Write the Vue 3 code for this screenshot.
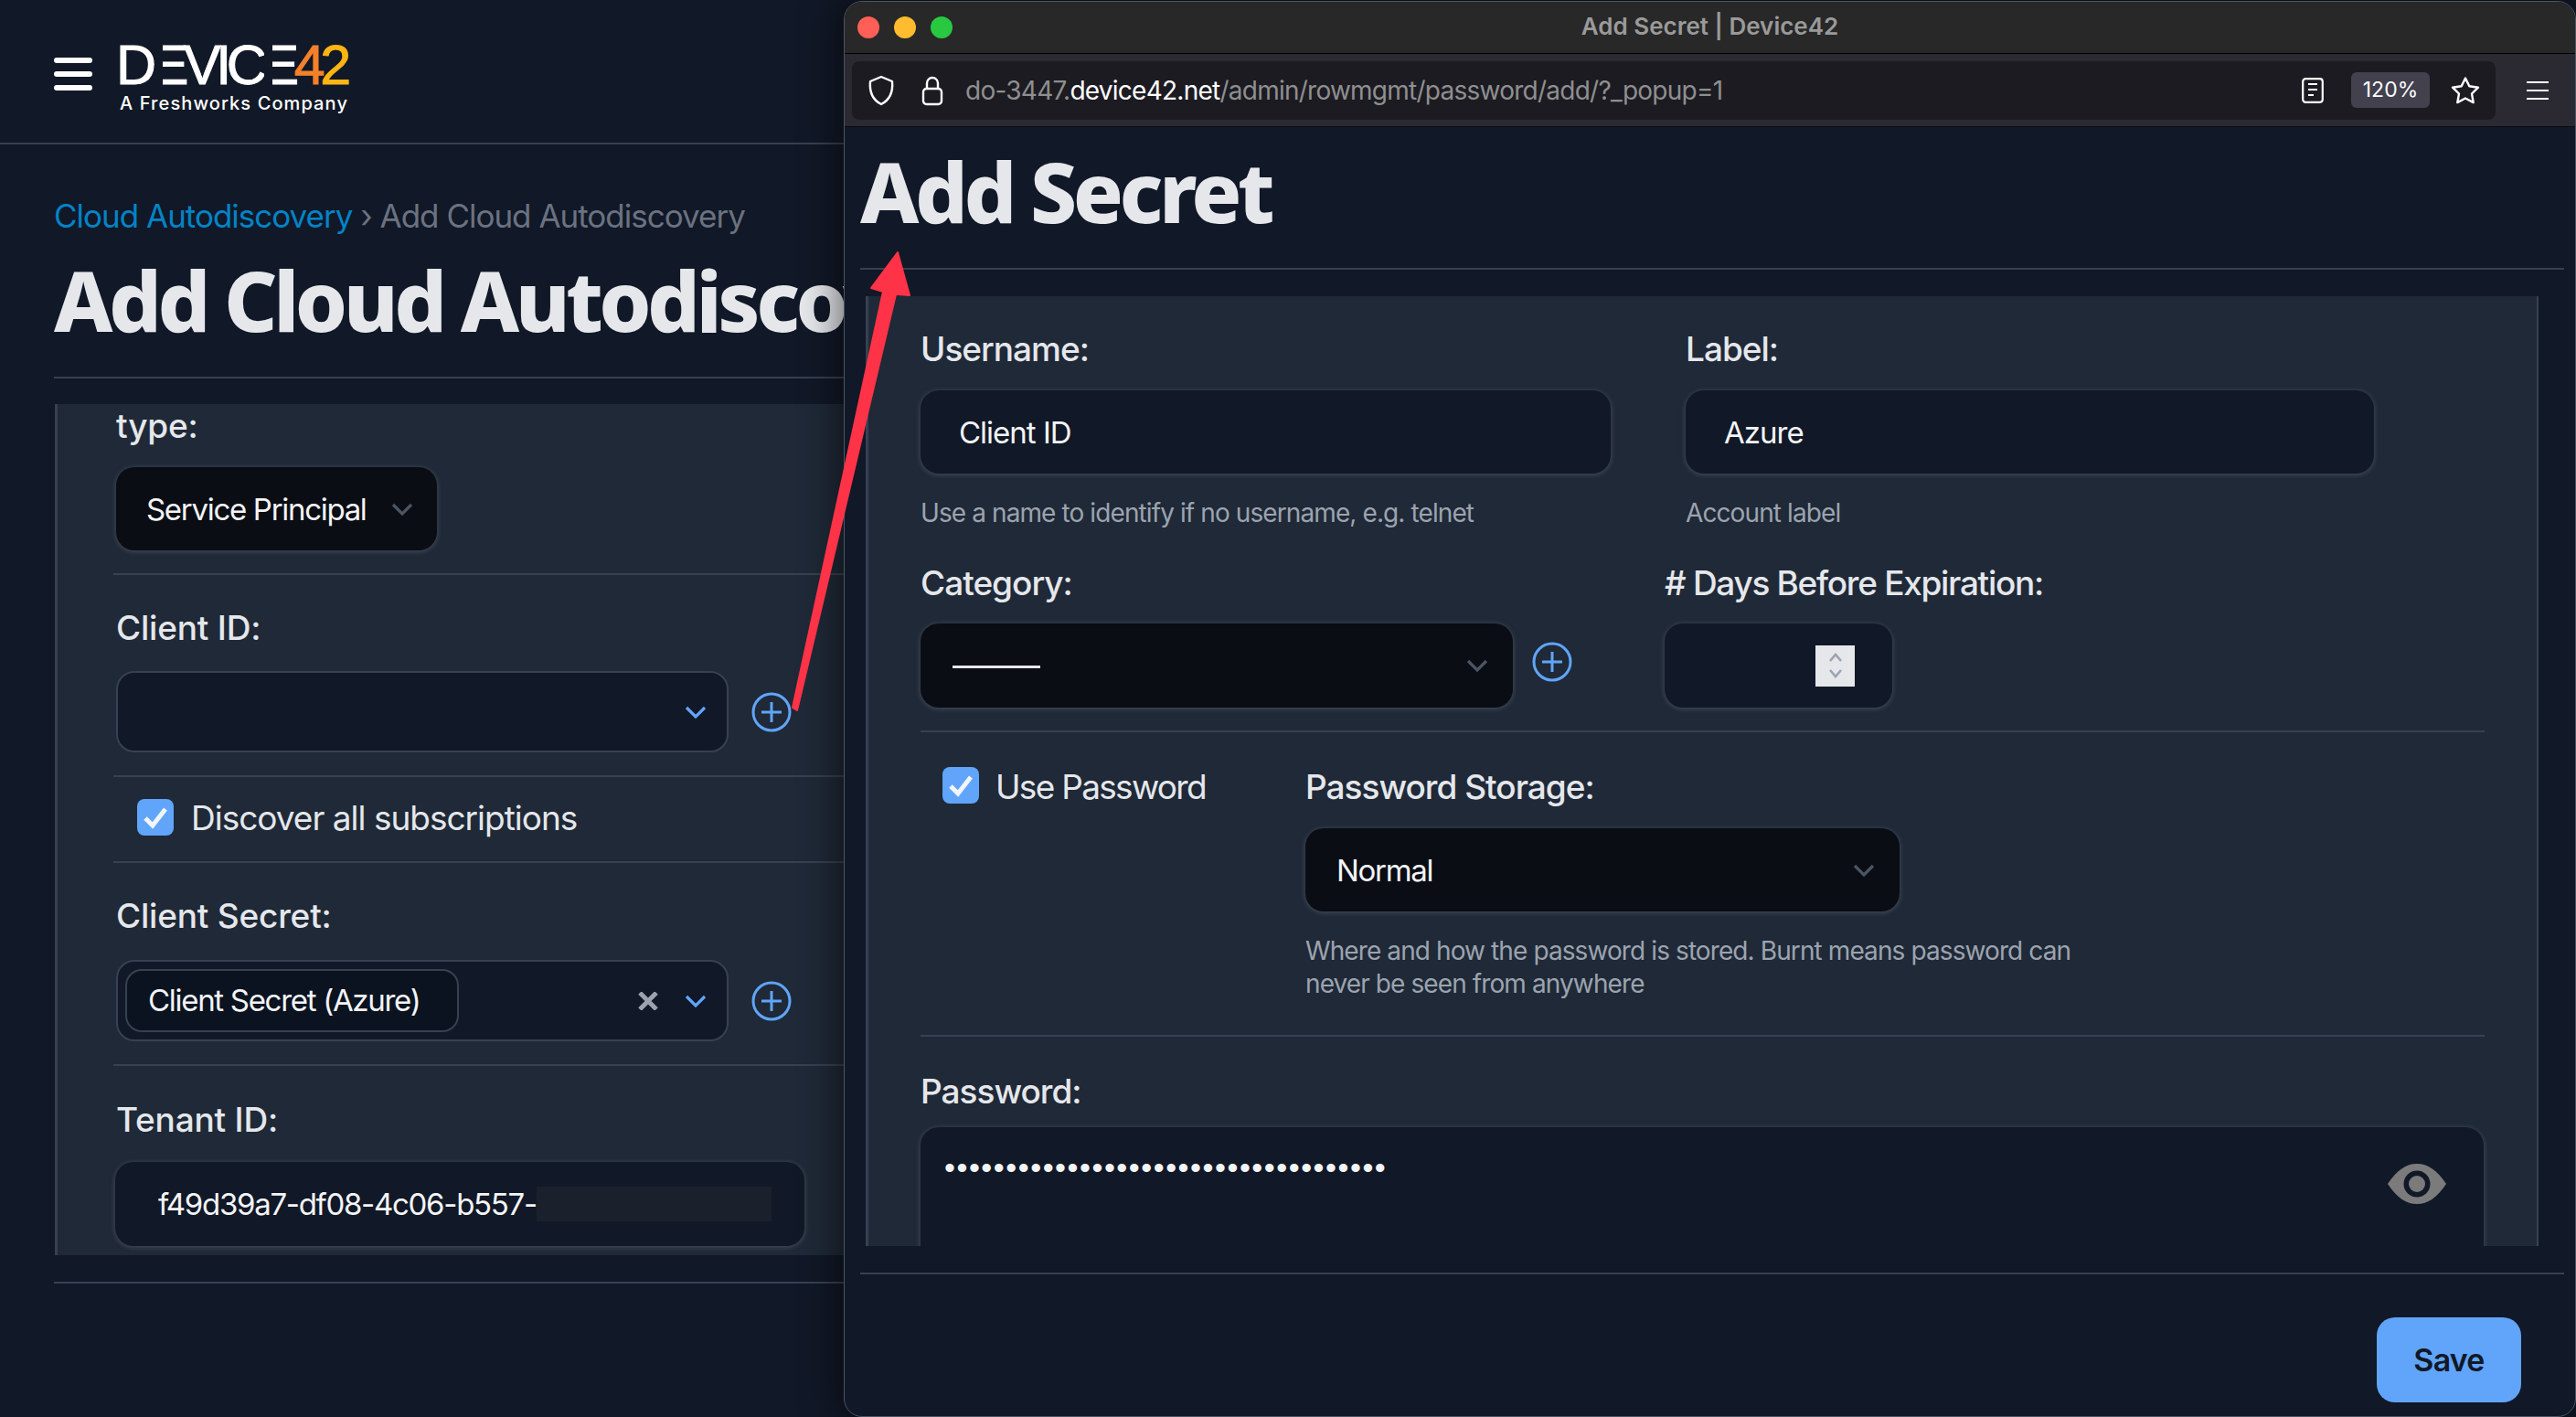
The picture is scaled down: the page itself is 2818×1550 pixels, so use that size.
<template>
  <div class="desk">
    <svg class="defs" aria-hidden="true">
      <symbol id="chev" viewBox="0 0 24 14">
        <polyline points="2,2 12,12 22,2" fill="none" stroke="currentColor" stroke-width="3.2" />
      </symbol>
      <symbol id="plus" viewBox="0 0 44 44">
        <circle cx="22" cy="22" r="20" fill="none" stroke="currentColor" stroke-width="3" />
        <path d="M22 11v22M11 22h22" fill="none" stroke="currentColor" stroke-width="3" />
      </symbol>
      <symbol id="check" viewBox="0 0 40 40">
        <polyline points="9,21 17,29 31,11" fill="none" stroke="currentColor" stroke-width="5" />
      </symbol>
    </svg>

    <!-- page behind the popup -->
    <div class="page">
      <header class="topbar">
        <button class="burger"><span></span><span></span><span></span></button>
        <div class="logo">
          <div class="logo-word">D<span class="logo-e">E</span>VIC<span class="logo-e">E</span><span class="four">4</span><span class="two">2</span></div>
          <div class="logo-sub">A Freshworks Company</div>
        </div>
      </header>

      <main class="content">
        <div class="crumbs"><a>Cloud Autodiscovery</a> › Add Cloud Autodiscovery</div>
        <h1 class="title">Add Cloud Autodiscovery</h1>
        <div class="rule"></div>

        <div class="panel back-panel">
          <div class="row row-type">
            <label>type:</label>
            <div class="control select type-select">
              <span>Service Principal</span>
              <svg class="chev grey"><use href="#chev" /></svg>
            </div>
          </div>
          <div class="row">
            <label>Client ID:</label>
            <div class="with-add">
              <div class="control picker">
                <svg class="chev blue"><use href="#chev" /></svg>
              </div>
              <svg class="plus"><use href="#plus" /></svg>
            </div>
          </div>
          <div class="row row-check">
            <span class="checkbox"><svg><use href="#check" /></svg></span>
            <span class="check-text">Discover all subscriptions</span>
          </div>
          <div class="row row-secret">
            <label>Client Secret:</label>
            <div class="with-add">
              <div class="control picker">
                <span class="tag">Client Secret (Azure)</span>
                <svg class="clear" viewBox="0 0 24 20"><path d="M3 1l18 18M21 1L3 19" stroke="currentColor" stroke-width="5" fill="none" /></svg>
                <svg class="chev blue"><use href="#chev" /></svg>
              </div>
              <svg class="plus"><use href="#plus" /></svg>
            </div>
          </div>
          <div class="row row-tenant">
            <label>Tenant ID:</label>
            <div class="control tenant">
              <span>f49d39a7-df08-4c06-b557-</span>
              <span class="redact"></span>
            </div>
          </div>
        </div>
        <div class="rule back-bottom"></div>
      </main>
    </div>

    <!-- popup window -->
    <section class="window">
      <div class="titlebar">
        <div class="lights"><i class="red"></i><i class="yellow"></i><i class="green"></i></div>
        <div class="win-title">Add Secret | Device42</div>
      </div>
      <div class="toolbar">
        <div class="urlbar">
          <svg class="tb-shield" viewBox="0 0 30 34"><path d="M15 2 L27 7 C28 18 25 27 15 32 C5 27 2 18 3 7 Z" fill="none" stroke="#fff" stroke-width="2.4" stroke-linejoin="round" /></svg>
          <svg class="tb-lock" viewBox="0 0 24 34"><rect x="2" y="15" width="20" height="17" rx="3.5" fill="none" stroke="#fff" stroke-width="2.4" /><path d="M6 15V9a6 6 0 0 1 12 0v6" fill="none" stroke="#fff" stroke-width="2.4" /></svg>
          <div class="url">do-3447.<b>device42.net</b>/admin/rowmgmt/password/add/?_popup=1</div>
          <svg class="tb-doc" viewBox="0 0 24 28"><rect x="1.2" y="1.2" width="21.6" height="25.6" rx="3" fill="none" stroke="#fff" stroke-width="2.2" /><path d="M7 7h10M7 13h10M7 19h6" stroke="#fff" stroke-width="2.2" /></svg>
          <div class="zoom-badge">120%</div>
          <svg class="tb-star" viewBox="0 0 34 32"><path d="M17 2.5l4.3 8.8 9.7 1.4-7 6.8 1.7 9.6-8.7-4.6-8.7 4.6 1.7-9.6-7-6.8 9.7-1.4z" fill="none" stroke="#fff" stroke-width="2.4" stroke-linejoin="round" /></svg>
        </div>
        <svg class="tb-menu" viewBox="0 0 24 20"><path d="M0 1h24M0 10h24M0 19h24" stroke="#fff" stroke-width="2" /></svg>
      </div>

      <div class="win-body">
        <h1 class="title">Add Secret</h1>
        <div class="rule"></div>

        <div class="panel front-panel">
          <div class="front-rows">
            <div class="grid-top">
              <div class="col">
                <label>Username:</label>
                <div class="control input">Client ID</div>
                <p class="help">Use a name to identify if no username, e.g. telnet</p>
              </div>
              <div class="col">
                <label>Label:</label>
                <div class="control input">Azure</div>
                <p class="help">Account label</p>
              </div>
            </div>
            <div class="grid-cat">
              <div class="col">
                <label>Category:</label>
                <div class="with-add cat-add">
                  <div class="control select cat-select">
                    <span class="dash"></span>
                    <svg class="chev grey"><use href="#chev" /></svg>
                  </div>
                  <svg class="plus"><use href="#plus" /></svg>
                </div>
              </div>
              <div class="col">
                <label class="days-label">#&nbsp;Days Before Expiration:</label>
                <div class="control days">
                  <span class="spin">
                    <svg viewBox="0 0 18 34"><path d="M3 12l6-7 6 7M3 22l6 7 6-7" fill="none" stroke="#9ca3af" stroke-width="2.6" /></svg>
                  </span>
                </div>
              </div>
            </div>
            <div class="grid-pass">
              <div class="use-pass">
                <span class="checkbox"><svg><use href="#check" /></svg></span>
                <span class="check-text">Use Password</span>
              </div>
              <div class="col">
                <label>Password Storage:</label>
                <div class="control select storage">
                  <span>Normal</span>
                  <svg class="chev grey"><use href="#chev" /></svg>
                </div>
                <p class="help storage-help">Where and how the password is stored. Burnt means password can never be seen from anywhere</p>
              </div>
            </div>
            <div class="pass-row">
              <label>Password:</label>
              <div class="control pass-box">
                <span class="dots">{{ dots }}</span>
                <svg class="eye" viewBox="0 0 64 44">
                  <path d="M0 22C10 7 20 0 32 0s22 7 32 22c-10 15-20 22-32 22S10 37 0 22z" fill="#7b7b7b" />
                  <circle cx="32" cy="22" r="14.5" fill="#111827" />
                  <circle cx="32" cy="22" r="9" fill="#7b7b7b" />
                </svg>
              </div>
            </div>
          </div>
        </div>

        <div class="rule win-bottom"></div>
        <div class="actions"><button class="save">Save</button></div>
      </div>
    </section>

    <!-- red annotation arrow, drawn on top of everything -->
    <svg class="arrow" viewBox="0 0 2818 1550">
      <polygon points="867,774 872,777 980,322 995,323 982,276 953,315 966,319" fill="#ff3347" stroke="#ff3347" stroke-width="2" stroke-linejoin="round" />
    </svg>
  </div>
</template>

<script setup>
const dots = '•'.repeat(36)
</script>

<style>
html, body {
  margin: 0;
  background: #111827;
}
</style>

<style scoped>
.desk {
  position: relative;
  width: 2818px;
  height: 1550px;
  overflow: hidden;
  background: #111827;
  color: #e5e7eb;
  font-family: Inter, "Noto Sans", sans-serif;
}

.defs {
  position: absolute;
  width: 0;
  height: 0;
}

/* back page */
.page {
  width: 930px;
  height: 1550px;
  overflow: hidden;
}

.topbar {
  height: 156px;
  border-bottom: 2px solid #374151;
  display: flex;
  align-items: center;
  padding-left: 59px;
  gap: 30px;
}

.burger {
  width: 42px;
  height: 36px;
  padding: 0;
  margin-top: 6px;
  border: 0;
  background: none;
  display: flex;
  flex-direction: column;
  justify-content: space-between;
}

.burger span {
  display: block;
  height: 6px;
  border-radius: 3px;
  background: #fff;
}

.logo {
  align-self: flex-start;
  width: 250px;
  padding-top: 47px;
}

.logo-word {
  font-family: "Liberation Sans", sans-serif;
  font-size: 61px;
  line-height: 48px;
  height: 48px;
  color: #fff;
  white-space: nowrap;
  letter-spacing: -5.4px;
  margin-left: -4px;
  -webkit-text-stroke: 1px currentColor;
}

.logo-e {
  position: relative;
}

.logo-e::before {
  content: "";
  position: absolute;
  left: 3px;
  top: 0;
  width: 9px;
  height: 100%;
  background: #111827;
}

.four {
  color: #f4812a;
}

.two {
  color: #fdb515;
}

.logo-sub {
  margin-top: 4px;
  font-size: 20px;
  font-weight: 500;
  line-height: 28px;
  letter-spacing: 1.1px;
  color: #fff;
  white-space: nowrap;
}

.content {
  padding: 54px 0 0 59px;
}

.crumbs {
  height: 48px;
  line-height: 48px;
  font-size: 35px;
  letter-spacing: -1px;
  color: #6b7280;
  white-space: nowrap;
}

.crumbs a {
  color: #0284c7;
}

.title {
  margin: 14px 0 30px;
  height: 108px;
  font-family: "Noto Sans", sans-serif;
  font-size: 91px;
  font-weight: 800;
  line-height: 108px;
  letter-spacing: -4.5px;
  color: #e5e7eb;
  white-space: nowrap;
}

.rule {
  height: 2px;
  background: #374151;
}

.panel {
  background: #1f2937;
  border-left: 3px solid #374151;
  overflow: hidden;
}

.back-panel {
  margin: 28px 0 0 1px;
  height: 931px;
  padding-left: 61px;
}

.back-bottom {
  margin-top: 29px;
}

label {
  display: block;
  height: 40px;
  line-height: 40px;
  font-size: 37px;
  font-weight: 500;
  letter-spacing: -1px;
  color: #e5e7eb;
  white-space: nowrap;
}

.row {
  padding: 38px 0 25px 3px;
  border-bottom: 2px solid #374151;
}

.row label {
  margin-bottom: 27px;
  letter-spacing: -.2px;
}

.row-type {
  padding-top: 4px;
}

.row-type label {
  margin-bottom: 25px;
}

.row-check {
  height: 94px;
  box-sizing: border-box;
  padding: 0 0 4px 26px;
  display: flex;
  align-items: center;
  gap: 19px;
}

.row-secret label {
  margin-bottom: 28px;
}

.row-tenant {
  padding-top: 39px;
  border-bottom: 0;
}

.row-tenant label {
  margin-bottom: 26px;
}

.control {
  box-sizing: border-box;
  display: flex;
  align-items: center;
  border-radius: 20px;
  background: #111827;
  font-size: 33px;
  letter-spacing: -1.3px;
  color: #f3f4f6;
  box-shadow: 0 1px 5px 1px rgba(107, 114, 128, .4);
  white-space: nowrap;
}

.select {
  background: #0a0d14;
  justify-content: space-between;
}

.type-select {
  width: 351px;
  height: 91px;
  padding: 0 26px 0 33px;
}

.chev {
  width: 24px;
  height: 14px;
  flex: none;
}

.chev.grey {
  color: #4b5563;
}

.chev.blue {
  color: #60a5fa;
}

.plus {
  width: 44px;
  height: 44px;
  flex: none;
  color: #60a5fa;
}

.with-add {
  display: flex;
  align-items: center;
  gap: 25px;
}

.picker {
  width: 670px;
  height: 89px;
  justify-content: flex-end;
  padding: 0 22px 0 8px;
  border: 2px solid #374151;
  box-shadow: none;
}

.tag {
  margin-right: auto;
  width: 365px;
  height: 69px;
  box-sizing: border-box;
  padding-left: 23px;
  line-height: 65px;
  border: 2px solid #374151;
  border-radius: 18px;
  background: #0b1320;
}

.clear {
  width: 24px;
  height: 20px;
  color: #9ca3af;
  margin-right: 28px;
}

.checkbox {
  width: 40px;
  height: 40px;
  flex: none;
  border-radius: 8px;
  background: #60a5fa;
  color: #f3f4f6;
}

.checkbox svg {
  display: block;
  width: 40px;
  height: 40px;
}

.check-text {
  font-size: 37px;
  letter-spacing: -1px;
  color: #e5e7eb;
}

.tenant {
  width: 754px;
  height: 92px;
  padding-left: 47px;
  margin-left: -1px;
  letter-spacing: -1.3px;
}

.redact {
  width: 257px;
  height: 38px;
  background: #1a202c;
}

/* popup window */
.window {
  position: absolute;
  left: 923px;
  top: 1px;
  width: 1895px;
  height: 1549px;
  box-sizing: border-box;
  border: 1px solid #4b5563;
  border-radius: 20px;
  overflow: hidden;
  background: #111827;
  box-shadow: 0 0 40px 6px rgba(0, 0, 0, .55);
}

.titlebar {
  position: relative;
  height: 56px;
  background: #282828;
  border-bottom: 1px solid #000;
  display: flex;
  align-items: center;
  justify-content: center;
}

.lights {
  position: absolute;
  left: 14px;
  top: 16px;
  display: flex;
  gap: 16px;
}

.lights i {
  width: 24px;
  height: 24px;
  border-radius: 50%;
}

.red {
  background: #ff5f57;
}

.yellow {
  background: #febc2e;
}

.green {
  background: #28c840;
}

.win-title {
  margin-top: -3px;
  font-size: 26px;
  font-weight: 600;
  color: #9a9a9a;
}

.toolbar {
  height: 79px;
  background: #2b2a33;
  border-bottom: 1px solid #0c0c10;
  display: flex;
  align-items: center;
  padding: 0 29px 0 8px;
}

.urlbar {
  width: 1798px;
  height: 64px;
  border-radius: 8px;
  background: #1c1b22;
  display: flex;
  align-items: center;
  padding: 0 16px 0 17px;
  box-sizing: border-box;
}

.tb-shield {
  width: 30px;
  height: 34px;
  margin-right: 29px;
}

.tb-lock {
  width: 24px;
  height: 34px;
  margin-right: 24px;
}

.url {
  font-size: 28px;
  letter-spacing: -.75px;
  color: #8f8f8f;
  white-space: nowrap;
  margin-right: auto;
}

.url b {
  font-weight: 400;
  color: #fff;
}

.tb-doc {
  width: 24px;
  height: 28px;
  margin-right: 30px;
}

.zoom-badge {
  width: 86px;
  height: 39px;
  line-height: 39px;
  text-align: center;
  border-radius: 6px;
  background: #42414d;
  font-size: 23px;
  color: #fbfbfe;
}

.tb-star {
  width: 34px;
  height: 32px;
  margin-left: 22px;
}

.tb-menu {
  width: 24px;
  height: 20px;
  margin-left: auto;
}

.win-body {
  padding: 16px 12px 0 17px;
}

.win-body .title {
  margin: 0 0 30px;
}

.front-panel {
  margin: 29px 28px 0 6px;
  height: 1039px;
  border-right: 2px solid #374151;
}

.front-rows {
  padding: 38px 0 0 57px;
  width: 1711px;
}

.col label {
  margin-bottom: 25px;
}

.grid-top {
  display: grid;
  grid-template-columns: 755px 753px;
  gap: 82px;
}

.input {
  height: 91px;
  padding-left: 42px;
  letter-spacing: -1px;
}

.help {
  margin: 25px 0 0;
  font-size: 28px;
  line-height: 36px;
  letter-spacing: -.9px;
  color: #9ca3af;
}

.grid-cat {
  margin-top: 39px;
  padding-bottom: 25px;
  border-bottom: 2px solid #374151;
  display: grid;
  grid-template-columns: 713px auto;
  gap: 101px;
}

.grid-cat .col label {
  margin-bottom: 24px;
}

.days-label {
  letter-spacing: -1.3px;
}

.cat-add {
  gap: 21px;
}

.cat-add .plus {
  margin-bottom: 8px;
}

.cat-select {
  width: 649px;
  height: 92px;
  padding: 0 27px 0 35px;
}

.dash {
  width: 96px;
  height: 3px;
  margin-top: 3px;
  background: #e5e7eb;
}

.days {
  width: 249px;
  height: 92px;
  justify-content: flex-end;
  padding-right: 41px;
}

.spin {
  width: 43px;
  height: 45px;
  background: #e5e7eb;
  display: flex;
  align-items: center;
  justify-content: center;
}

.spin svg {
  width: 18px;
  height: 34px;
}

.grid-pass {
  padding: 38px 0 38px 24px;
  border-bottom: 2px solid #374151;
  display: flex;
}

.use-pass {
  width: 397px;
  display: flex;
  align-items: flex-start;
  gap: 18px;
}

.use-pass .check-text {
  line-height: 44px;
  letter-spacing: -1.7px;
}

.grid-pass .col label {
  margin-top: 2px;
  margin-bottom: 25px;
}

.storage {
  width: 650px;
  height: 91px;
  padding: 0 27px 0 34px;
}

.storage-help {
  width: 850px;
}

.pass-row {
  padding-top: 40px;
}

.pass-row label {
  margin-bottom: 19px;
}

.pass-box {
  position: relative;
  width: 1710px;
  height: 190px;
  align-items: flex-start;
  padding-left: 26px;
}

.dots {
  font-family: "Liberation Sans", sans-serif;
  font-size: 34px;
  line-height: 36px;
  margin-top: 26px;
  letter-spacing: 1.55px;
}

.eye {
  position: absolute;
  right: 41px;
  top: 40px;
  width: 64px;
  height: 44px;
}

.win-bottom {
  margin-top: 29px;
}

.actions {
  display: flex;
  justify-content: flex-end;
  padding: 47px 47px 0 0;
}

.save {
  width: 158px;
  height: 93px;
  border: 0;
  border-radius: 20px;
  background: #60a5fa;
  font-family: Inter, sans-serif;
  font-size: 34px;
  font-weight: 600;
  letter-spacing: -.8px;
  color: #111827;
}

.arrow {
  position: absolute;
  inset: 0;
  width: 2818px;
  height: 1550px;
  pointer-events: none;
}
</style>
